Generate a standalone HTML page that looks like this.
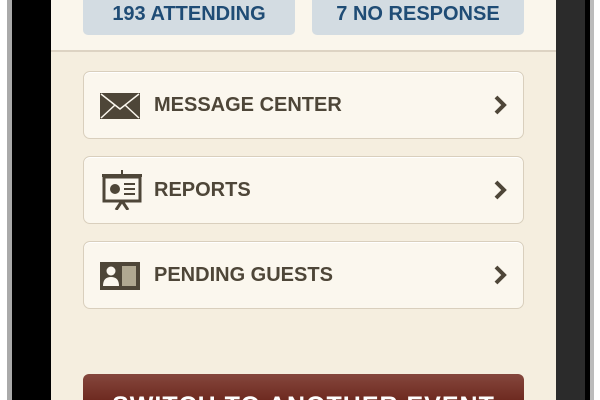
<!DOCTYPE html><html><head><style>
body{margin:0;width:600px;height:400px;overflow:hidden;background:#fff;position:relative;font-family:"Liberation Sans",sans-serif;font-weight:bold}
div{position:absolute;box-sizing:border-box}
.item{left:83px;width:441px;height:68px;background:#fbf7ee;border:1.5px solid #d9cfbd;border-radius:7px;box-shadow:0 1px 0 #fff inset}
.item span{position:absolute;left:70px;top:22px;font-size:20px;color:#4e4638;letter-spacing:0px}
.chev{position:absolute;right:16px;top:23px}
.ic{position:absolute;left:16px}
</style></head><body>
<div style="left:7px;top:0;width:5px;height:400px;background:#aaa"></div>
<div style="left:12px;top:0;width:39px;height:400px;background:#000"></div>
<div style="left:51px;top:0;width:505px;height:400px;background:#f5eedf"></div>
<div style="left:51px;top:0;width:505px;height:52px;background:#faf6ec;border-bottom:2px solid #ddd3c3"></div>
<div style="left:556px;top:0;width:29px;height:400px;background:#2b2b2b"></div>
<div style="left:585px;top:0;width:5px;height:400px;background:#000"></div>
<div style="left:590px;top:0;width:4px;height:400px;background:#bbb"></div>
<div style="left:83px;top:-6px;width:212px;height:41px;background:#d3dce2;border-radius:5px;color:#1f4c75;font-size:20px;text-align:center;line-height:40px">193 ATTENDING</div>
<div style="left:312px;top:-6px;width:212px;height:41px;background:#d3dce2;border-radius:5px;color:#1f4c75;font-size:20px;text-align:center;line-height:40px">7 NO RESPONSE</div>

<div class="item" style="top:71px"><svg class="ic" style="top:21px" width="40" height="26"><rect width="40" height="26" fill="#4e4638"/><path d="M1 1L20 16L39 1M1 25L15 12M39 25L25 12" stroke="#fbf7ee" stroke-width="1.5" fill="none"/></svg><span>MESSAGE CENTER</span><svg class="chev" width="14" height="20"><path d="M3 2L11 10L3 18" stroke="#4e4638" stroke-width="4" fill="none"/></svg></div>
<div class="item" style="top:156px"><svg class="ic" style="top:13px" width="44" height="40"><rect x="2" y="4" width="40" height="3" fill="#4e4638"/><rect x="21" y="0" width="2" height="4" fill="#4e4638"/><rect x="4" y="7" width="36" height="24" fill="none" stroke="#4e4638" stroke-width="3"/><circle cx="15" cy="19" r="5" fill="#4e4638"/><path d="M24 14h11M24 19h11M24 24h11" stroke="#4e4638" stroke-width="2"/><path d="M22 31L16 40M22 31L28 40" stroke="#4e4638" stroke-width="3"/></svg><span>REPORTS</span><svg class="chev" width="14" height="20"><path d="M3 2L11 10L3 18" stroke="#4e4638" stroke-width="4" fill="none"/></svg></div>
<div class="item" style="top:241px"><svg class="ic" style="top:20px" width="40" height="28"><rect width="40" height="28" fill="#4e4638"/><circle cx="11" cy="9" r="4.5" fill="#fbf7ee"/><path d="M3 24Q3 15 11 15Q19 15 19 24Z" fill="#fbf7ee"/><rect x="22" y="4" width="14" height="20" fill="#b0a891"/></svg><span>PENDING GUESTS</span><svg class="chev" width="14" height="20"><path d="M3 2L11 10L3 18" stroke="#4e4638" stroke-width="4" fill="none"/></svg></div>

<div style="left:83px;top:374px;width:441px;height:26px;overflow:hidden;background:linear-gradient(#85473d,#6e2a20);border-radius:6px 6px 0 0;color:#fff;font-size:25px;text-align:center;padding-top:18px;letter-spacing:1px;white-space:nowrap">SWITCH TO ANOTHER EVENT</div>
</body></html>
